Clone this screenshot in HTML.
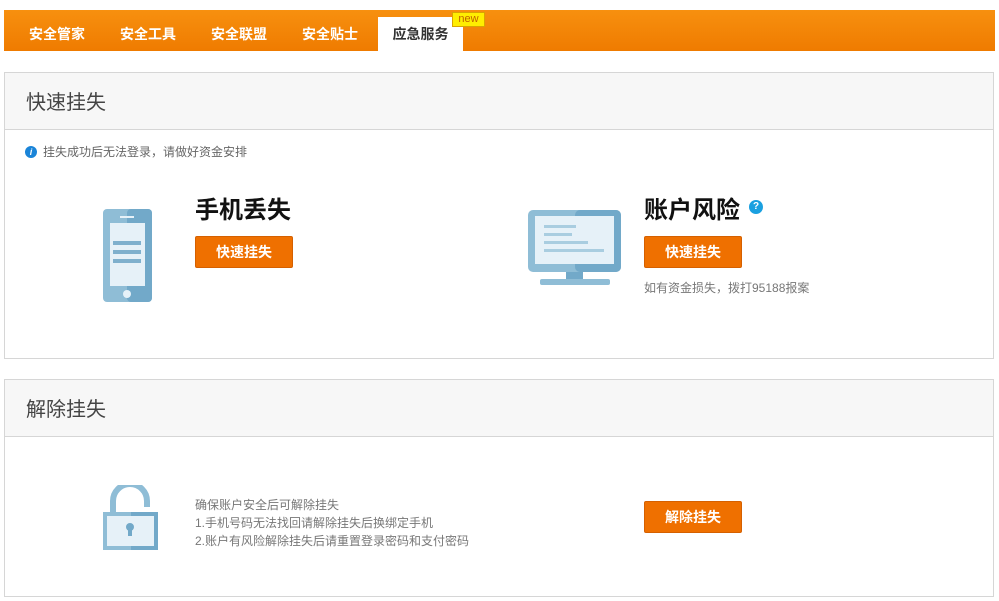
<!DOCTYPE html>
<html><head><meta charset="utf-8"><style>
*{margin:0;padding:0;box-sizing:border-box}
body{width:999px;height:601px;overflow:hidden;background:#fff;font-family:"Liberation Sans","Noto Sans CJK SC",sans-serif;position:relative}
.nav{position:absolute;left:4px;top:10px;width:991px;height:41px;background:linear-gradient(#f7900f,#ef7b00)}
.nav span{position:absolute;top:14px;color:#fff;font-size:14px;font-weight:bold}
.act{position:absolute;left:374px;top:7px;width:85px;height:34px;background:#fff;color:#333;font-size:14px;font-weight:bold;text-align:center;line-height:34px}
.new{position:absolute;left:448px;top:2px;width:33px;height:15px;background:#ffee00;border:1px solid #d9a400;color:#c06000;font-size:11px;text-align:center;line-height:13px}
.panel{position:absolute;left:4px;width:990px;border:1px solid #d6d6d6}
.hd{height:57px;background:#f7f7f7;border-bottom:1px solid #d6d6d6;font-size:20px;color:#444;padding:13px 0 0 21px}
.btn{position:absolute;width:98px;height:32px;background:#ef7000;border:1px solid #d56000;border-radius:2px;color:#fff;font-weight:bold;font-size:14px;text-align:center;line-height:30px}
.t{position:absolute;font-size:24px;font-weight:bold;color:#111}
.g{position:absolute;font-size:12px;color:#777;line-height:18px}
</style></head><body>
<div class="nav">
<span style="left:25px">安全管家</span><span style="left:116px">安全工具</span><span style="left:207px">安全联盟</span><span style="left:298px">安全贴士</span>
<div class="act">应急服务</div><div class="new">new</div>
</div>
<div class="panel" style="top:72px;height:287px"><div class="hd">快速挂失</div></div>
<div style="position:absolute;left:25px;top:146px;width:12px;height:12px;border-radius:50%;background:#1a84d8;color:#fff;font-size:9px;font-weight:bold;text-align:center;line-height:12px;font-style:italic">i</div>
<div class="g" style="left:43px;top:143px;color:#666">挂失成功后无法登录，请做好资金安排</div>
<svg style="position:absolute;left:103px;top:209px" width="49" height="93"><rect x="0" y="0" width="49" height="93" rx="4" fill="#8fbdd6"/><rect x="24" y="0" width="25" height="93" rx="4" fill="#72a9c9"/><rect x="7" y="14" width="35" height="63" fill="#e6f1f8"/><rect x="10" y="32" width="28" height="4" fill="#7fb0cd"/><rect x="10" y="41" width="28" height="4" fill="#7fb0cd"/><rect x="10" y="50" width="28" height="4" fill="#7fb0cd"/><rect x="17" y="7" width="14" height="2" fill="#e6f1f8"/><circle cx="24" cy="85" r="4" fill="#e6f1f8"/></svg>
<div class="t" style="left:195px;top:190px">手机丢失</div>
<div class="btn" style="left:195px;top:236px">快速挂失</div>
<svg style="position:absolute;left:528px;top:210px" width="93" height="76"><rect x="0" y="0" width="93" height="62" rx="5" fill="#8fbdd6"/><rect x="47" y="0" width="46" height="62" rx="5" fill="#72a9c9"/><rect x="7" y="6" width="79" height="48" fill="#e6f1f8"/><rect x="16" y="15" width="32" height="3" fill="#a9cde0"/><rect x="16" y="23" width="28" height="3" fill="#a9cde0"/><rect x="16" y="31" width="44" height="3" fill="#a9cde0"/><rect x="16" y="39" width="60" height="3" fill="#a9cde0"/><rect x="38" y="62" width="17" height="8" fill="#72a9c9"/><rect x="12" y="69" width="70" height="6" rx="2" fill="#8fbdd6"/></svg>
<div class="t" style="left:644px;top:190px">账户风险</div>
<div style="position:absolute;left:749px;top:200px;width:14px;height:14px;border-radius:50%;background:#1aa0e0;color:#fff;font-size:10px;font-weight:bold;text-align:center;line-height:14px">?</div>
<div class="btn" style="left:644px;top:236px">快速挂失</div>
<div class="g" style="left:644px;top:279px">如有资金损失，拨打95188报案</div>
<div class="panel" style="top:379px;height:218px"><div class="hd">解除挂失</div></div>
<svg style="position:absolute;left:103px;top:485px" width="55" height="65"><path d="M10 28 V16 A17 17 0 0 1 44 16 V22" fill="none" stroke="#8fbdd6" stroke-width="6"/><rect x="0" y="27" width="55" height="38" fill="#8fbdd6"/><rect x="28" y="27" width="27" height="38" fill="#72a9c9"/><rect x="4" y="31" width="47" height="30" fill="#e6f1f8"/><circle cx="27" cy="42" r="4" fill="#72a9c9"/><rect x="25" y="44" width="4" height="7" fill="#72a9c9"/></svg>
<div class="g" style="left:195px;top:496px">确保账户安全后可解除挂失<br>1.手机号码无法找回请解除挂失后换绑定手机<br>2.账户有风险解除挂失后请重置登录密码和支付密码</div>
<div class="btn" style="left:644px;top:501px">解除挂失</div>
</body></html>
